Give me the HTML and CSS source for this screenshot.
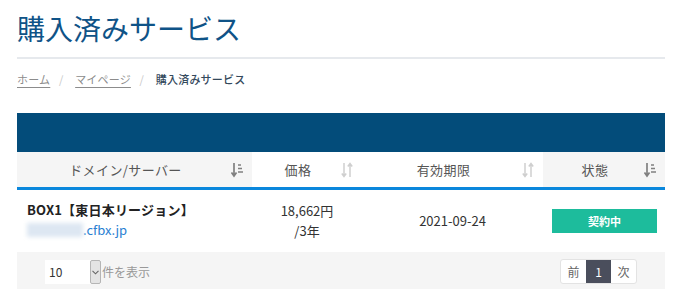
FILE: index.html
```html
<!DOCTYPE html>
<html lang="ja">
<head>
<meta charset="utf-8">
<link rel="stylesheet" href="styles.css">
</head>
<body>
<div class="page">
  <h1 class="title">購入済みサービス</h1>
  <hr class="rule">
  <nav class="crumbs">
    <a href="#" class="crumb-link">ホーム</a>
    <span class="sep">/</span>
    <a href="#" class="crumb-link">マイページ</a>
    <span class="sep">/</span>
    <span class="crumb-current">購入済みサービス</span>
  </nav>

  <div class="table-wrap">
    <div class="topbar"></div>
    <table class="grid">
      <colgroup>
        <col class="c1"><col class="c2"><col class="c3"><col class="c4">
      </colgroup>
      <thead>
        <tr>
          <th class="sorted">ドメイン/サーバー
            <svg class="sort" width="12" height="16" viewBox="0 0 12 16"><path d="M3 1v12M0.5 10.5L3 14l2.5-3.5" fill="none" stroke="#808080" stroke-width="1.7"/><path d="M7 3h3M7 6.5h4M7 10h5" stroke="#808080" stroke-width="1.3"/></svg>
          </th>
          <th>価格
            <svg class="sort" width="12" height="16" viewBox="0 0 12 16"><path d="M3 1v13M0.8 11.5L3 14.5l2.2-3" fill="none" stroke="#cfcfcf" stroke-width="1.5"/><path d="M9 15V2M6.8 4.5L9 1.5l2.2 3" fill="none" stroke="#cfcfcf" stroke-width="1.5"/></svg>
          </th>
          <th>有効期限
            <svg class="sort" width="12" height="16" viewBox="0 0 12 16"><path d="M3 1v13M0.8 11.5L3 14.5l2.2-3" fill="none" stroke="#cfcfcf" stroke-width="1.5"/><path d="M9 15V2M6.8 4.5L9 1.5l2.2 3" fill="none" stroke="#cfcfcf" stroke-width="1.5"/></svg>
          </th>
          <th class="sorted">状態
            <svg class="sort" width="12" height="16" viewBox="0 0 12 16"><path d="M3 1v12M0.5 10.5L3 14l2.5-3.5" fill="none" stroke="#808080" stroke-width="1.7"/><path d="M7 3h3M7 6.5h4M7 10h5" stroke="#808080" stroke-width="1.3"/></svg>
          </th>
        </tr>
      </thead>
      <tbody>
        <tr>
          <td class="cell-name">
            <div class="svc-name">BOX1【東日本リージョン】</div>
            <a href="#" class="svc-link"><span class="blur"></span>.cfbx.jp</a>
          </td>
          <td class="cell-center">18,662円<br>/3年</td>
          <td class="cell-center">2021-09-24</td>
          <td class="cell-status"><span class="badge">契約中</span></td>
        </tr>
      </tbody>
    </table>
    <div class="footer">
      <div class="length">
        <div class="select"><span class="select-val">10</span><span class="select-arrow"><svg width="7" height="5" viewBox="0 0 7 5"><path d="M0.5 0.8L3.5 3.8 6.5 0.8" fill="none" stroke="#666" stroke-width="1.1"/></svg></span></div>
        <span class="length-label">件を表示</span>
      </div>
      <div class="pager">
        <span class="pg">前</span>
        <span class="pg active">1</span>
        <span class="pg">次</span>
      </div>
    </div>
  </div>
</div>
</body>
</html>
```

FILE: styles.css
```css
* { box-sizing: border-box; }
html, body { margin: 0; padding: 0; background: #fff; }
body {
  font-family: "Noto Sans CJK JP", "Noto Sans", sans-serif;
  color: #333;
}
.page {
  width: 665px;
  padding: 0 0 0 17px;
}
.title {
  margin: 0;
  padding-top: 9px;
  height: 57px;
  font-size: 28px;
  font-weight: 400;
  line-height: 38px;
  color: #0f5387;
}
.rule {
  margin: 0;
  border: 0;
  height: 2px;
  background: #e6e9ed;
}
.crumbs {
  height: 54px;
  padding-top: 10px;
  font-size: 11px;
  line-height: 20px;
  letter-spacing: 0.2px;
}
.crumb-link {
  color: #8c8c8c;
  text-decoration: underline;
  text-underline-offset: 3px;
}
.sep {
  color: #c8c8c8;
  margin: 0 9px 0 6px;
}
.crumb-current {
  color: #34495c;
  font-weight: 500;
}
.table-wrap {
  width: 648px;
}
.topbar {
  height: 39px;
  background: #034c7a;
}
.grid {
  width: 648px;
  border-collapse: collapse;
  table-layout: fixed;
}
.c1 { width: 235px; }
.c2 { width: 110px; }
.c3 { width: 181px; }
.c4 { width: 122px; }
.grid th {
  position: relative;
  height: 36px;
  padding: 0 18px 0 0;
  font-size: 13px;
  font-weight: 400;
  color: #555;
  text-align: center;
  background: #fff;
  border-bottom: 3px solid #0a87dc;
  letter-spacing: 0.4px;
}
.grid th.sorted { background: #f5f5f5; }
.sort {
  position: absolute;
  right: 9px;
  top: 10px;
}
.grid td {
  height: 64px;
  font-size: 13px;
  line-height: 20px;
  color: #333;
  vertical-align: middle;
}
.cell-name {
  padding: 0 0 0 10px;
}
.svc-name {
  font-weight: 700;
  color: #222;
  letter-spacing: 0.2px;
}
.svc-link {
  color: #2b7fd2;
  text-decoration: none;
  display: inline-flex;
  align-items: center;
}
.blur {
  display: inline-block;
  width: 56px;
  height: 14px;
  background: #dde7f2;
  filter: blur(2px);
}
.cell-center {
  text-align: center;
}
.cell-status {
  padding: 0 9px 0 9px;
}
.badge {
  display: block;
  width: 105px;
  height: 24px;
  line-height: 24px;
  text-align: center;
  background: #1dbc9c;
  color: #fff;
  font-size: 11px;
  font-weight: 700;
}
.footer {
  height: 37px;
  background: #f5f5f5;
  display: flex;
  align-items: center;
  justify-content: space-between;
  padding: 0 28px;
}
.length {
  display: flex;
  align-items: center;
}
.select {
  width: 56px;
  height: 24px;
  display: flex;
  background: #fff;
  margin-top: 3px;
}
.select-val {
  flex: 1;
  font-size: 12px;
  line-height: 24px;
  padding-left: 4px;
  color: #333;
}
.select-arrow {
  width: 11px;
  background: #e4e4e4;
  border: 1px solid #b5b5b5;
  border-radius: 2px;
  display: flex;
  align-items: center;
  justify-content: center;
}
.length-label {
  font-size: 12px;
  color: #999;
  margin-left: 1px;
  margin-top: 2px;
}
.pager {
  display: flex;
  height: 25px;
  border: 1px solid #e3e3e3;
  border-radius: 3px;
  background: #fff;
  margin-top: 1px;
}
.pg {
  width: 25px;
  font-size: 12px;
  line-height: 23px;
  text-align: center;
  color: #666;
}
.pg.active {
  background: #4a4e5c;
  color: #fff;
}
```
